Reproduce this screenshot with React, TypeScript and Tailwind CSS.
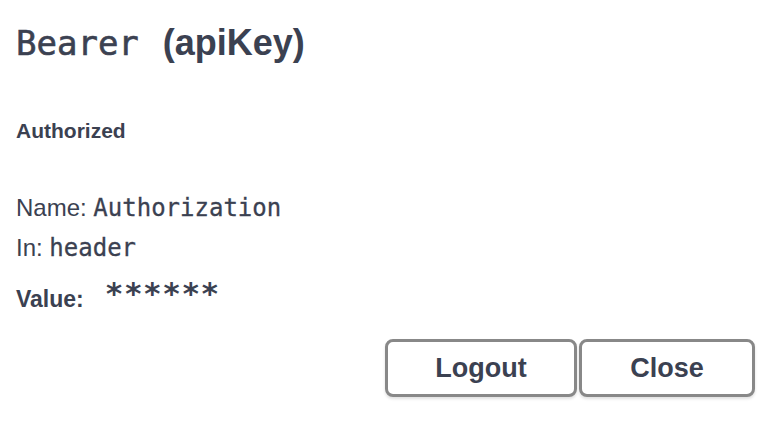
import React from 'react';

const sans = "font-['Liberation_Sans',Arial,sans-serif]";
const mono = "font-['DejaVu_Sans_Mono','Liberation_Mono',monospace]";

const AuthButton: React.FC<{ label: string; className?: string }> = ({ label, className }) => (
  <button
    type="button"
    className={`h-[58px] rounded-[8px] border-[3px] border-[#888888] bg-white text-[27px] font-bold text-[#3b4151] shadow-[0_2px_3px_rgba(0,0,0,0.12)] ${sans} ${className ?? ''}`}
  >
    {label}
  </button>
);

export default function App() {
  return (
    <div className={`h-[430px] w-[778px] bg-white px-4 text-[#3b4151] ${sans}`}>
      <h4 className="pt-[23px] text-[36px] leading-[40px] font-bold">
        <code className={`${mono} text-[34px] font-normal [-webkit-text-stroke:0.6px_#3b4151]`}>Bearer</code>
        <span className="ml-[24px]">(apiKey)</span>
      </h4>
      <h6 className="mt-[56px] text-[21px] leading-[24px] font-bold">Authorized</h6>
      <div className="mt-[45px]">
        <p className="text-[24px] leading-[40px]">
          Name: <code className={`${mono} text-[24px] [-webkit-text-stroke:0.3px_#3b4151]`}>Authorization</code>
        </p>
        <p className="text-[24px] leading-[40px]">
          In: <code className={`${mono} text-[24px] [-webkit-text-stroke:0.3px_#3b4151]`}>header</code>
        </p>
        <div className="mt-[10px] flex items-start">
          <label className="pt-[6px] text-[23px] leading-[30px] font-bold">Value:</label>
          <code className={`${mono} ml-[21px] text-[31px] leading-[30px] font-bold tracking-[0.5px]`}>******</code>
        </div>
      </div>
      <div className="mt-[25px] flex justify-end gap-[2px] pr-[7px]">
        <AuthButton label="Logout" className="w-[192px]" />
        <AuthButton label="Close" className="w-[176px]" />
      </div>
    </div>
  );
}
